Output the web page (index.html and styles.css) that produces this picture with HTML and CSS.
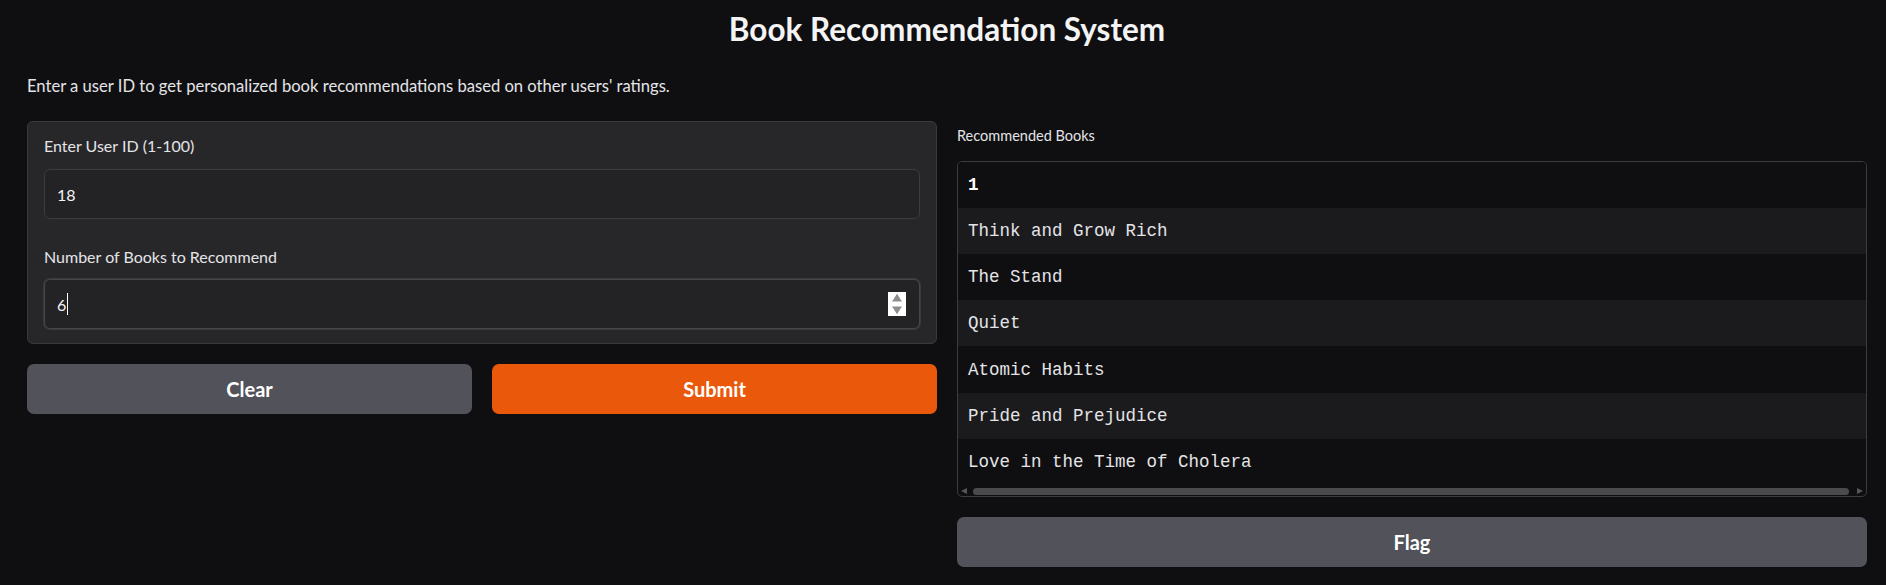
FILE: index.html
```html
<!DOCTYPE html>
<html lang="en">
<head>
<meta charset="utf-8">
<title>Book Recommendation System</title>
<link rel="stylesheet" href="styles.css">
</head>
<body>
<div class="app">
  <h1 class="title">Book Recommendation System</h1>
  <p class="desc">Enter a user ID to get personalized book recommendations based on other users' ratings.</p>
  <div class="main">
    <div class="col">
      <div class="panel">
        <label class="field-label">Enter User ID (1-100)</label>
        <div class="input"><span class="value">18</span></div>
        <label class="field-label second">Number of Books to Recommend</label>
        <div class="input focused">
          <span class="value">6</span><span class="caret"></span>
          <span class="spacer"></span>
          <svg class="spin" width="18" height="24" viewBox="0 0 18 24" aria-hidden="true">
            <rect x="0" y="0" width="18" height="24" fill="#ffffff"/>
            <polygon points="4,9.5 9,1.8 14,9.5" fill="#8f8f8f"/>
            <polygon points="4,14.5 14,14.5 9,22.2" fill="#8f8f8f"/>
          </svg>
        </div>
      </div>
      <div class="btn-row">
        <button class="btn secondary">Clear</button>
        <button class="btn primary">Submit</button>
      </div>
    </div>
    <div class="col">
      <div class="out-block">
        <div class="out-label">Recommended Books</div>
        <div class="table">
          <div class="row head">1</div>
          <div class="row alt">Think and Grow Rich</div>
          <div class="row">The Stand</div>
          <div class="row alt">Quiet</div>
          <div class="row">Atomic Habits</div>
          <div class="row alt">Pride and Prejudice</div>
          <div class="row">Love in the Time of Cholera</div>
          <div class="hscroll">
            <span class="arrow left"></span>
            <span class="thumb"></span>
            <span class="arrow right"></span>
          </div>
        </div>
      </div>
      <button class="btn secondary">Flag</button>
    </div>
  </div>
</div>
</body>
</html>
```
FILE: styles.css
```css
* { box-sizing: border-box; }
html, body { margin: 0; padding: 0; }
body {
  background: #0f0f11;
  color: #e4e4e7;
  font-family: Lato, "Noto Sans", sans-serif;
  width: 1886px;
  height: 585px;
  overflow: hidden;
}
.app {
  padding: 11px 19px 0 27px;
}
.title {
  margin: 0;
  text-align: center;
  font-size: 31.5px;
  line-height: 36px;
  font-weight: 700;
  color: #f4f4f5;
}
.desc {
  margin: 27px 0 0 0;
  font-size: 16.6px;
  line-height: 24px;
  color: #e4e4e7;
}
.main {
  margin-top: 23px;
  display: grid;
  grid-template-columns: 910px 910px;
  column-gap: 20px;
  align-items: start;
}
.col {
  display: flex;
  flex-direction: column;
  gap: 20px;
}
.panel {
  background: #27272a;
  border: 1px solid #3a3a3e;
  border-radius: 6px;
  padding: 13px 16px 14px 16px;
  display: flex;
  flex-direction: column;
}
.field-label {
  font-size: 16px;
  line-height: 22px;
  color: #e4e4e7;
  margin-bottom: 12px;
}
.field-label.second {
  margin-top: 27px;
  margin-bottom: 11px;
}
.input {
  height: 50px;
  border: 1px solid #3b3b40;
  border-radius: 6px;
  background: #232326;
  padding: 0 13px 0 12px;
  display: flex;
  align-items: center;
  font-size: 16px;
  color: #f4f4f5;
}
.input.focused {
  border-color: #45454b;
  box-shadow: 0 0 0 1px #38383d;
}
.caret {
  width: 1px;
  height: 22px;
  background: #ffffff;
  margin-left: 1px;
}
.spacer { flex: 1; }
.spin { display: block; }
.btn-row {
  display: grid;
  grid-template-columns: 1fr 1fr;
  column-gap: 20px;
}
.btn {
  height: 50px;
  border: none;
  border-radius: 7px;
  font-family: Lato, "Noto Sans", sans-serif;
  font-size: 20px;
  font-weight: 700;
  color: #ffffff;
  cursor: pointer;
}
.btn.secondary { background: #52525b; }
.btn.primary { background: #ea580c; }
.out-block {
  display: flex;
  flex-direction: column;
}
.out-label {
  font-size: 14.5px;
  line-height: 20px;
  margin-top: 5px;
  margin-bottom: 15px;
  color: #e4e4e7;
}
.table {
  border: 1px solid #3b3b40;
  border-radius: 5px;
  overflow: hidden;
  background: #0f0f11;
}
.row {
  height: 46.3px;
  display: flex;
  align-items: center;
  padding-left: 10px;
  font-family: "Liberation Mono", "DejaVu Sans Mono", monospace;
  font-size: 17.5px;
  color: #e4e4e7;
  background: #0f0f11;
}
.row.head {
  height: 45.5px;
  font-weight: 700;
  color: #ffffff;
}
.row.alt { background: #1b1b1e; }
.hscroll {
  height: 11px;
  display: flex;
  align-items: center;
  padding: 2px 3px 1px 3px;
  gap: 6px;
}
.thumb {
  flex: 1;
  height: 7px;
  border-radius: 4px;
  background: #4b4b4e;
}
.arrow {
  width: 0;
  height: 0;
  border-top: 3.5px solid transparent;
  border-bottom: 3.5px solid transparent;
}
.arrow.left { border-right: 6px solid #56565a; }
.arrow.right { border-left: 6px solid #56565a; margin-left: 2px; }
```
